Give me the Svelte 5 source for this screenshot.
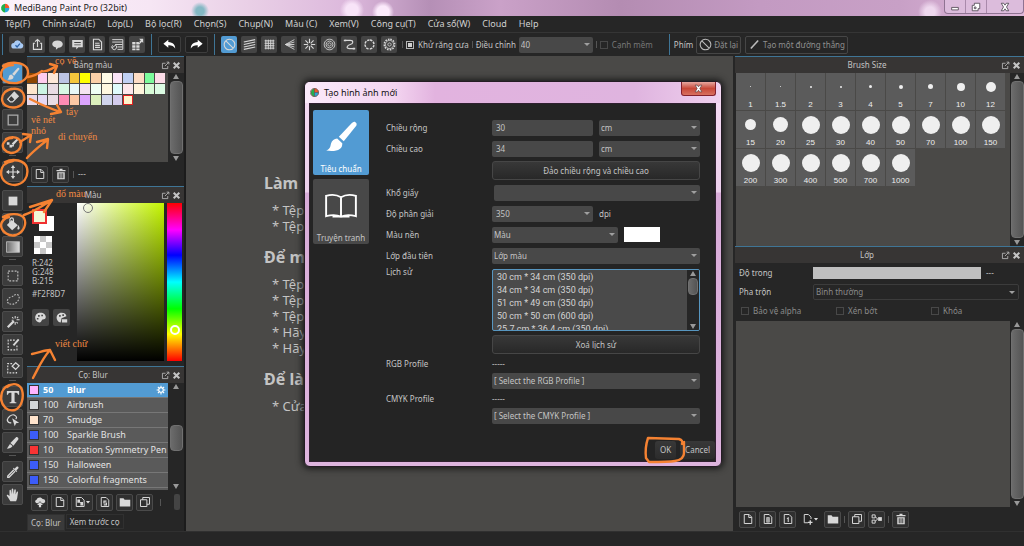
<script lang="ts">
  // Icons, all on a 16x16 grid. f = filled shape, otherwise stroked
  type Shape = { d: string; f?: boolean; w?: number; dash?: string; c?: string }
  const icons: Record<string, Shape[]> = {
    cloud: [
      { d: 'M4 13a3.5 3.5 0 0 1-.4-7A4.600 4.600 0 0 1 12.400 6 3.600 3.600 0 0 1 12.500 13z', f: true, c: '#a9cbf5' },
      { d: 'M5.500 9l2 2 3.500-4', w: 1.6, c: '#2c62a8' },
    ],
    share: [{ d: 'M5 6.500H3V14h10V6.500h-2M8 11V2M5 4.500L8 1.800l3 2.700' }],
    bubble: [{ d: 'M8 3c4 0 6.500 1.800 6.500 4.500S12 12 9 12l-3 2.500.3-2.700C3.400 11.500 1.500 9.800 1.500 7.500 1.500 4.800 4 3 8 3z', f: true }],
    note: [{ d: 'M1.500 2.500h13v9H9L6.500 14v-2.500h-5zM4 5v1h8V5zM4 8v1h8V8z', f: true }],
    doc: [{ d: 'M3 1.500h6.500L13 5v9.500H3zM5 6.500h5.500M5 9h6M5 11.500h6' }],
    table: [{ d: 'M1.500 2h13v12H8M1.500 5h13M5 8h9M8 11h6', w: 1.2 }, { d: 'M2 9a3 3 0 1 0 4 0M1.500 12l5-4', w: 1.2 }],
    tiles: [{ d: 'M1.500 5h4v3h-4zM6.500 5h4v3h-4zM1.500 9h4v3h-4zM6.500 9h4v3h-4zM1.500 13h4v2h-4zM6.500 13h4v2h-4zM10 1h5v5l-1.500-1.500L11 7 9.500 5.500 12 3z', f: true }],
    undo: [{ d: 'M6.500 2L.5 7l6 5V9c4-.2 6.500 1 8.500 4 0-4.500-2.500-7.500-8.500-8z', f: true }],
    redo: [{ d: 'M9.500 2l6 5-6 5V9C5.500 8.800 3 10 1 13c0-4.500 2.500-7.500 8.500-8z', f: true }],
    ban: [{ d: 'M8 1.500a6.500 6.500 0 1 0 .01 0zM3.500 3.500l9 9', w: 1.3 }],
    lines: [{ d: 'M1 5l14-3M1 8l14-3M1 11l14-3M1 14l14-3' }],
    grid: [{ d: 'M3.500 2v12M6.500 2v12M9.500 2v12M12.500 2v12M2 3.500h12M2 6.500h12M2 9.500h12M2 12.500h12', w: 1.2 }],
    vanish: [{ d: 'M14 2L3 8l11 6M3 8h11M14 5L3 8l11 3', w: 1.1 }],
    radial: [{ d: 'M8 1v5M8 10v5M1 8h5M10 8h5M3 3l3.500 3.500M9.500 9.500L13 13M13 3L9.500 6.500M6.500 9.500L3 13' }],
    rings: [{ d: 'M8 1.500a6.500 6.500 0 1 0 .01 0zM8 3.800a4.200 4.200 0 1 0 .01 0zM8 6a2 2 0 1 0 .01 0z', w: 1.1 }],
    curve: [{ d: 'M2 3h7c4 0 4 4 0 5s-6 5-1 5h5' }, { d: 'M1 2h3v2H1zM12 12h3v2h-3z', f: true }],
    ellipse: [{ d: 'M8 2.500a5.500 5.500 0 1 0 .01 0z', w: 1.8, dash: '3 1.300' }],
    gearRing: [{ d: 'M8 1.500a6.500 6.500 0 1 0 .01 0z', dash: '2 1.400', w: 1.8 }, { d: 'M8 3a5 5 0 1 0 .01 0zM8 6a2 2 0 1 0 .01 0z', w: 1.1 }],
    stroke: [{ d: 'M3.500 13L12.500 3', w: 2 }],
    brush: [
      { d: 'M14.800 1c.9.700.6 1.400 0 2.200L9.300 10 7 7.900l6-6.400c.6-.6 1.200-.9 1.800-.5z', f: true },
      { d: 'M6.200 8.700l2.400 2.200c.2 3-2.500 4.100-7.600 3.500 1.900-.7 1.900-1.600 2.300-3.300.4-1.500 1.500-2.300 2.900-2.400z', f: true },
    ],
    eraser: [{ d: 'M9.500 2.500L14 7l-6.500 6.500H5L2 10.500z' }, { d: 'M9.500 2.500L14 7l-4 4-4.500-4.500z', f: true }],
    rect: [{ d: 'M2.500 2.500h11v11h-11z', w: 1.5, c: '#aaa' }],
    pixelBrush: [{ d: 'M13.500 2l1.500 1.500-6.500 7-2-2z', f: true }, { d: 'M1 7h3v3H1zM4 10h3v3H4zM7 10h2v2H7z', f: true }],
    move: [{ d: 'M8 0l2.500 3.500h-1.800v3.800h3.800V5.500L16 8l-3.500 2.500V8.700H8.700v3.800h1.800L8 16l-2.500-3.500h1.800V8.700H3.500v1.800L0 8l3.500-2.500v1.800h3.800V3.500H5.500z', f: true }],
    square: [{ d: 'M3 3h10v10H3z', f: true }],
    bucket: [{ d: 'M6.500 3.500l7 6-6.500 5.500-6-6z', f: true }, { d: 'M4.500 7V3c0-2.500 4-2.500 4 0v3', w: 1.4 }, { d: 'M14 9c1.500 2.500 2 3.500 1 5-1 .6-2 .2-2-1z', f: true }],
    gradient: [],
    marquee: [{ d: 'M2.500 2.500h11v11h-11z', w: 1.3, dash: '2.200 1.500', c: '#bbb' }],
    lasso: [{ d: 'M3 13c-3-2-1-6 2-7 4-1 5-4 8-3s2.500 5 0 8-7 4-10 2z', w: 1.3, dash: '2 1.500', c: '#bbb' }],
    wand: [{ d: 'M2 14L9 7', w: 2.6 }, { d: 'M10.500 1v3M10.500 8v3M6.500 6h2M12 5.500h3.500M12.500 3.500L14 2M12 8l1.500 1.500M7 2.500l1.500 1.500', w: 1.2 }],
    selectPen: [{ d: 'M10 2.500H2.500v11h10V8', w: 1.3, dash: '2 1.500' }, { d: 'M14.500 1.500l-6 7', w: 2.2 }],
    selectErase: [{ d: 'M7 3H2v10.500h10V11', w: 1.3, dash: '2 1.500' }, { d: 'M11 2l4 3.500-4 4L7 6z', w: 1.4 }],
    text: [{ d: 'M1 1h14v4.500h-1.200C13.300 3.300 12.500 3 9.800 3v9.500c0 1 .4 1.300 2 1.500v1H4.200v-1c1.600-.2 2-.5 2-1.500V3C3.500 3 2.700 3.300 2.200 5.500H1z', f: true }],
    operate: [{ d: 'M6 11C2 12 .5 8 2.500 5.500S8 1 10.500 3 12 6 11 7', w: 1.4 }, { d: 'M7 6l8 5-3.500.7L10 15z', f: true }],
    slice: [{ d: 'M11.500 1.500c1-1 3.500 1 2.500 2.500L8.500 11 5 8z', f: true }, { d: 'M4.500 9l3 2.500c-1.500 2-3.500 3-6.500 3z', f: true }],
    dropper: [{ d: 'M9 5.500l-7 7V14h1.500l7-7', w: 1.5 }, { d: 'M8 4l4 4 .8-.8-1-1L14 4c1-2-.5-3-2-2L9.800 4.200l-1-1z', f: true }],
    hand: [{ d: 'M5 15C3.500 12 1.500 10 .8 8.200c.7-.9 1.800-.3 3.200 1.300V3c0-1.200 1.500-1.200 1.700 0l.5 4 .3-5.500c.1-1.200 1.700-1.200 1.800 0L8.700 7l.8-4.800c.2-1.200 1.700-1 1.700.2L11 7.500l1.200-3c.5-1 1.700-.6 1.500.5L13 10c-.2 2.500-.8 3.500-1.500 5z', f: true }],
    page: [{ d: 'M3 2h6.500L13 5.500V14H3zM9 2v4h4', w: 1.3 }],
    trash: [{ d: 'M3 5.500h10V15H3zM5 7v6.500h1.200V7zM7.400 7v6.500h1.200V7zM9.800 7v6.500H11V7zM2 2.800h4V1h4v1.800h4v1.500H2z', f: true }],
    palette: [{ d: 'M8 2c4 0 6.500 2.500 6.500 5.500 0 2.500-2 3-3.500 3-2 0-1.500 3.500-4 3.500C4 14 1.500 11.500 1.500 8S4 2 8 2zM5 5v2h2V5zM9 4.500v2h2v-2zM3.500 8.500v2h2v-2z', f: true }],
    paletteEdit: [{ d: 'M8 2c4 0 6 2 6 4.500L8 9l-1 5c-3 0-5-3-5-6s2.500-6 6-6zM5 5v2h2V5zM9 4v2h2V4zM8.500 10H15v4H8.500z', f: true }],
    gear: [{ d: 'M8 4.300a3.700 3.700 0 1 0 .01 0z', w: 2 }, { d: 'M8 1v2.500M8 12.500V15M1 8h2.500M12.500 8H15M3 3l2 2M11 11l2 2M13 3l-2 2M5 11l-2 2', w: 1.8 }],
    download: [{ d: 'M4 9.500C1 9 .8 5.500 3.500 5 4.500 1 10 1 11.500 4c4-.3 4.500 5 1.500 5.500h-2.500L8 7 5.500 9.500zM8 8l4 4H9.500v3h-3v-3H4z', f: true }],
    pageImage: [{ d: 'M3 2h7l3.500 3.500V14H3z', w: 1.3 }, { d: 'M4.500 4.500H8V8h4v4.500H8.500V9h-4z', f: true }],
    pageS: [{ d: 'M3 2h6.500L13 5.500V14H3z', w: 1.3 }, { d: 'M10 6.800H6.500v2.500H10v2.500H6.300' }],
    page8: [{ d: 'M3 2h6.500L13 5.500V14H3z', w: 1.3 }, { d: 'M6.500 6.500h3v5.500h-3zM6.500 9.200h3' }],
    page1: [{ d: 'M3 2h6.500L13 5.500V14H3z', w: 1.3 }, { d: 'M6.500 7.500L8.300 6.500V12' }],
    pageAdd: [{ d: 'M8 13H3V2h5.500L12 5.500V8', w: 1.3 }, { d: 'M11 9.500v6M8 12.500h6', w: 1.8 }],
    folder: [{ d: 'M1 3h5l1.500 2H15v9H1z', f: true }],
    copy: [{ d: 'M2 5h8.500v9H2zM5 5V2h9v9h-3.500', w: 1.3 }],
    merge: [{ d: 'M1.500 2.500h4v4h-4zM1.500 9.500h4v4h-4zM5.500 5L9 8l-3.500 3', w: 1.3 }, { d: 'M9.500 5.500h5v5h-5z', f: true }],
    popout: [{ d: 'M8 4H2.500v9.500H12V9M7 9l6.500-6.500M10 2h4v4', w: 1.4 }],
    cross: [{ d: 'M3 3l10 10M13 3L3 13', w: 3.6 }],
    book: [{ d: 'M8 3.900C6 2.600 3.500 2.500 1 3.200V12.800c2.500-.7 5-.7 7 .2 2-.9 4.500-.9 7-.2V3.200C12.500 2.500 10 2.600 8 3.900zM8 3.900v9', w: .9 }, { d: 'M4 12.600c2-.4 3 0 4 .8 1-.8 2-1.200 4-.8v.8H4z', f: true }],
  }

  const menus = ['Tệp(F)', 'Chỉnh sửa(E)', 'Lớp(L)', 'Bộ lọc(R)', 'Chọn(S)', 'Chụp(N)', 'Màu (C)', 'Xem(V)', 'Công cụ(T)', 'Cửa sổ(W)', 'Cloud', 'Help']
  const fileActions = ['cloud', 'share', 'bubble', 'note', 'doc', 'table', 'tiles']
  const snaps = ['ban', 'lines', 'grid', 'vanish', 'radial', 'rings', 'curve', 'ellipse', 'gearRing']
  const toolGroups = [
    ['brush', 'eraser', 'rect', 'pixelBrush'],
    ['move'],
    ['square', 'bucket', 'gradient'],
    ['marquee', 'lasso', 'wand', 'selectPen', 'selectErase'],
    ['text', 'operate', 'slice'],
    ['dropper', 'hand'],
  ]
  const swatches = [
    '#8b4500', '#ffccee', '#fde8d8', '#bcc4e4', '#f4c63c', '#ffff00', '#fbd0a8', '#fffbe6', '#fbe4f6', '#c0d0f4', '#fddcc4', '#7cfc9c', '#fcdce8',
    '#fde6cc', '#ccf4e4', '#e8dce4', '#d8f8e4', '#e8f8f8', '#f4e4f0', '#f0fff4', '#fff8e0', '#e0fcfc', '#fde8ec', '#fff4dc', '#d8fcd8', '#dcfce4',
    '#e8d8e8', '#e4d8f4', '#e8dce4', '#fc8cb4', '#fcc8a4', '#dca4fc', '#dcf0bc', '#d0d4ec', '#d4ccec', '#fff4cc',
  ]
  const brushes = [
    { size: 50, name: 'Blur', color: '#ffb4ff' },
    { size: 100, name: 'Airbrush', color: '#d2d6d8' },
    { size: 70, name: 'Smudge', color: '#ffe4cc' },
    { size: 100, name: 'Sparkle Brush', color: '#3c5cf8' },
    { size: 10, name: 'Rotation Symmetry Pen', color: '#fa3434' },
    { size: 150, name: 'Halloween', color: '#3c5cf8' },
    { size: 150, name: 'Colorful fragments', color: '#3c5cf8' },
  ]
  // [label, dot diameter]
  const brushSizes = [
    [1, 1], [1.5, 1], [2, 2], [3, 2], [4, 3], [5, 4], [7, 5], [10, 8], [12, 10],
    [15, 11], [20, 15], [25, 18], [30, 18], [40, 18], [50, 18], [70, 18], [100, 18], [150, 18],
    [200, 18], [300, 18], [400, 18], [500, 18], [700, 18], [1000, 18],
  ]
  const tips = [
    { title: 'Làm', lines: ['Tệp', 'Tệp'] },
    { title: 'Để m', lines: ['Tệp', 'Tệp', 'Tệp', 'Hãy', 'Hãy'] },
    { title: 'Để là', lines: ['Cửa'] },
  ]
  const history = ['30 cm * 34 cm (350 dpi)', '34 cm * 34 cm (350 dpi)', '51 cm * 49 cm (350 dpi)', '50 cm * 50 cm (600 dpi)', '25.7 cm * 36.4 cm (350 dpi)']

  let tool = $state('brush')
  let snap = $state('ban')
  let brush = $state(0)
  let width = $state('30')
  let height = $state('34')
  let antialias = $state(true)

  const swap = () => {
    const w = width
    width = height
    height = w
  }
</script>

{#snippet icon(name)}
  <svg class="icon" viewBox="0 0 16 16" aria-hidden="true">
    {#if name === 'gradient'}
      <defs>
        <linearGradient id="toolGradient"><stop offset="0" stop-color="#666" /><stop offset="1" stop-color="#ddd" /></linearGradient>
      </defs>
      <path d="M.5 2h15v12H.5z" fill="url(#toolGradient)" stroke="#bbb" />
    {/if}
    {#each icons[name] as s}
      <path
        d={s.d}
        fill={s.f ? (s.c ?? 'currentColor') : 'none'}
        fill-rule="evenodd"
        stroke={s.f ? 'none' : (s.c ?? 'currentColor')}
        stroke-width={s.w ?? 1.4}
        stroke-dasharray={s.dash}
      />
    {/each}
  </svg>
{/snippet}

{#snippet logo()}
  <svg class="logo" viewBox="0 0 16 16" aria-hidden="true">
    <circle cx="8" cy="8" r="7.500" fill="#fff" />
    <path d="M8 1C3 2 1 6 2 10c1 3 3 5 6 5V8z" fill="#22b14c" />
    <path d="M8 1c4 0 7 3 7 7H8z" fill="#f0592a" />
    <path d="M15 8c0 4-3 7-7 7V8z" fill="#2aa7d8" />
  </svg>
{/snippet}

{#snippet panelHead(title)}
  <header class="panel-head">
    <h2>{title}</h2>
    <button aria-label="Pop out {title}">{@render icon('popout')}</button>
    <button aria-label="Close {title}">{@render icon('cross')}</button>
  </header>
{/snippet}

{#snippet scrollbar(kind)}
  <div class="scrollbar {kind}" aria-hidden="true"><i></i><b></b><i class="down"></i></div>
{/snippet}

{#snippet dropdown(id, value, kind)}
  <span class="dropdown {kind}">
    <select {id} aria-label={value || 'Khổ giấy'}><option>{value}</option></select>
  </span>
{/snippet}

<main>
  <div class="titlebar">
    {@render logo()}
    <h1>MediBang Paint Pro (32bit)</h1>
    <div class="window-buttons">
      <button aria-label="Minimize"><svg viewBox="0 0 12 12"><path d="M2 6.500h8v3H2z" /></svg></button>
      <button aria-label="Restore"><svg viewBox="0 0 12 12"><path d="M4 1.500h6.500V8H8.500v2.500H1.500V4H4z" /><path d="M4 6h2v2H4z" /></svg></button>
      <button class="wide" aria-label="Close"><svg viewBox="0 0 12 12"><path d="M1.500 1.500h3L6 3.800l1.500-2.300h3L7.800 6l2.700 4.500h-3L6 8.200l-1.500 2.300h-3L4.200 6z" /></svg></button>
    </div>
  </div>

  <nav class="menubar">
    {#each menus as m}<button>{m}</button>{/each}
  </nav>

  <div class="toolbar">
    <i class="grip"></i>
    <div class="tool-row">
      {#each fileActions as a}<button class="tile" aria-label={a}>{@render icon(a)}</button>{/each}
    </div>
    <i class="grip"></i>
    <div class="tool-row">
      <button class="tile history" aria-label="Undo">{@render icon('undo')}</button>
      <button class="tile history" aria-label="Redo">{@render icon('redo')}</button>
    </div>
    <i class="grip"></i>
    <div class="tool-row">
      {#each snaps as s}
        <button class="tile" class:active={snap === s} aria-label={s} onclick={() => (snap = s)}>{@render icon(s)}</button>
      {/each}
    </div>
    <div class="options">
      <i class="sep"></i>
      <label class="check"><input type="checkbox" bind:checked={antialias} />Khử răng cưa</label>
      <i class="sep"></i>
      <label for="correction">Điều chỉnh</label>
      {@render dropdown('correction', '40', 'correction')}
      <i class="sep"></i>
      <label class="check dim"><input type="checkbox" disabled />Cạnh mềm</label>
      <i class="grip late"></i>
      <span>Phím</span>
      <div class="tool-row">
        <button class="outlined">{@render icon('ban')}Đặt lại</button>
        <button class="outlined">{@render icon('stroke')}Tạo một đường thẳng</button>
      </div>
    </div>
  </div>

  <div class="workspace">
    <div class="tools">
      {#each toolGroups as group, i}
        {#if i}<i></i>{/if}
        {#each group as t}
          <button class="tile" class:active={tool === t} aria-label={t} onclick={() => (tool = t)}>{@render icon(t)}</button>
        {/each}
      {/each}
    </div>

    <div class="side left">
      <section class="panel palette-panel">
        {@render panelHead('Bảng màu')}
        <div class="scroll-area">
          <div class="swatches">
            {#each swatches as color, i}
              <button class:current={i === swatches.length - 1} style="background: {color}" aria-label={color}></button>
            {/each}
          </div>
          {@render scrollbar('full')}
        </div>
        <div class="panel-tools">
          <button class="tile" aria-label="New color">{@render icon('page')}</button>
          <button class="tile" aria-label="Delete color">{@render icon('trash')}</button>
          <i class="sep"></i><span>---</span>
        </div>
      </section>

      <section class="panel color-panel">
        {@render panelHead('Màu')}
        <div class="color-body">
          <div class="color-info">
            <div class="fore-back"><i></i><b></b></div>
            <div class="transparent"></div>
            <p>R:242<br />G:248<br />B:215</p>
            <p>#F2F8D7</p>
            <div class="color-tools">
              <button class="tile" aria-label="Palette">{@render icon('palette')}</button>
              <button class="tile" aria-label="Edit palette">{@render icon('paletteEdit')}</button>
            </div>
          </div>
          <div class="shade"><i></i></div>
          <div class="hue"><i></i></div>
        </div>
      </section>

      <section class="panel brush-panel">
        {@render panelHead('Cọ: Blur')}
        <div class="scroll-area">
          <ul class="brushes">
            {#each brushes as b, i}
              <li>
                <button class:selected={brush === i} onclick={() => (brush = i)}>
                  <i style="background: {b.color}"></i><span class="size">{b.size}</span><span class="name">{b.name}</span>
                  {#if brush === i}{@render icon('gear')}{/if}
                </button>
              </li>
            {/each}
          </ul>
          {@render scrollbar('middle')}
        </div>
        <div class="panel-tools">
          <button class="tile" aria-label="Download brush">{@render icon('download')}</button>
          <button class="tile" aria-label="New brush">{@render icon('page')}</button>
          <button class="tile menu" aria-label="New brush from image">{@render icon('pageImage')}</button>
          <button class="tile" aria-label="Script brush">{@render icon('pageS')}</button>
          <button class="tile" aria-label="Brush folder">{@render icon('folder')}</button>
          <button class="tile" aria-label="Duplicate brush">{@render icon('copy')}</button>
          <i class="sep"></i>
          <b class="stub"></b>
        </div>
      </section>
      <div class="tabs">
        <button class="on">Cọ: Blur</button>
        <button>Xem trước cọ</button>
      </div>
    </div>

    <div class="canvas">
      {#each tips as tip}
        <h3>{tip.title}</h3>
        <ul>
          {#each tip.lines as line}<li>* {line}</li>{/each}
        </ul>
      {/each}
    </div>

    <div class="side right">
      <section class="panel size-panel">
        {@render panelHead('Brush Size')}
        <div class="scroll-area">
          <div class="sizes">
            {#each brushSizes as [size, dot]}
              <button><span class="dot"><i style="width: {dot}px; height: {dot}px"></i></span>{size}</button>
            {/each}
          </div>
          {@render scrollbar('full')}
        </div>
      </section>

      <section class="panel layer-panel">
        {@render panelHead('Lớp')}
        <div class="layer-form">
          <label for="opacity">Độ trong</label>
          <input id="opacity" type="range" value="100" />
          <span>---</span>
          <label for="blend">Pha trộn</label>
          {@render dropdown('blend', 'Bình thường', 'blend')}
        </div>
        <div class="layer-checks">
          <label class="check"><input type="checkbox" disabled />Bảo vệ alpha</label>
          <label class="check"><input type="checkbox" disabled />Xén bớt</label>
          <label class="check"><input type="checkbox" disabled />Khóa</label>
        </div>
        <div class="scroll-area">
          <div class="layers"></div>
          {@render scrollbar('full')}
        </div>
        <div class="panel-tools">
          <button class="tile" aria-label="New layer">{@render icon('page')}</button>
          <button class="tile" aria-label="New 8bit layer">{@render icon('page8')}</button>
          <button class="tile" aria-label="New 1bit layer">{@render icon('page1')}</button>
          <button class="tile menu bare" aria-label="Add layer">{@render icon('pageAdd')}</button>
          <button class="tile" aria-label="New folder">{@render icon('folder')}</button>
          <i class="sep"></i>
          <button class="tile" aria-label="Duplicate layer">{@render icon('copy')}</button>
          <button class="tile" aria-label="Merge layers">{@render icon('merge')}</button>
          <i class="sep"></i>
          <button class="tile" aria-label="Delete layer">{@render icon('trash')}</button>
        </div>
      </section>
    </div>
  </div>
  <footer class="statusbar"></footer>

  <!-- New image window -->
  <div class="dialog" role="dialog" aria-label="Tạo hình ảnh mới">
    <div class="dialog-title">
      {@render logo()}
      <h2>Tạo hình ảnh mới</h2>
      <button aria-label="Close dialog"><svg viewBox="0 0 12 12"><path d="M1.500 1.500h3L6 3.800l1.500-2.300h3L7.800 6l2.700 4.500h-3L6 8.200l-1.500 2.300h-3L4.200 6z" /></svg></button>
    </div>
    <div class="dialog-body">
      <div class="kinds">
        <button class="on">{@render icon('brush')}<span>Tiêu chuẩn</span></button>
        <button>{@render icon('book')}<span>Truyện tranh</span></button>
      </div>
      <form onsubmit={(e) => e.preventDefault()}>
        <label for="width">Chiều rộng</label>
        <div class="pair"><input id="width" bind:value={width} />{@render dropdown('width-unit', 'cm', '')}</div>
        <label for="height">Chiều cao</label>
        <div class="pair"><input id="height" bind:value={height} />{@render dropdown('height-unit', 'cm', '')}</div>
        <button type="button" class="wide-button" onclick={swap}>Đảo chiều rộng và chiều cao</button>
        <label for="paper">Khổ giấy</label>
        <div class="field paper">{@render dropdown('paper', '', '')}</div>
        <label for="resolution">Độ phân giải</label>
        <div class="pair">{@render dropdown('resolution', '350', 'inset')}<span>dpi</span></div>
        <label for="background">Màu nền</label>
        <div class="field">{@render dropdown('background', 'Màu', 'background')}<i class="fill-color"></i></div>
        <label for="first-layer">Lớp đầu tiên</label>
        <div class="field">{@render dropdown('first-layer', 'Lớp màu', '')}</div>
        <span class="history-label">Lịch sử</span>
        <div class="history-box">
          <ul>
            {#each history as h}<li>{h}</li>{/each}
          </ul>
          {@render scrollbar('short')}
        </div>
        <button type="button" class="wide-button">Xoá lịch sử</button>
        <label for="rgb">RGB Profile</label>
        <span>-----</span>
        <div class="field profile">{@render dropdown('rgb', '[ Select the RGB Profile ]', '')}</div>
        <label for="cmyk">CMYK Profile</label>
        <span>-----</span>
        <div class="field profile">{@render dropdown('cmyk', '[ Select the CMYK Profile ]', '')}</div>
      </form>
      <div class="dialog-actions">
        <button>OK</button>
        <button>Cancel</button>
      </div>
    </div>
  </div>

  <!-- Handwritten notes on top of the app -->
  <svg class="notes" width="1024" height="546" viewBox="0 0 1024 546">
    <path d="M3 66c7-5 20-4 24 2 3 7-1 13-10 15-9 1-17-3-16-9 0-5 5-9 12-9" />
    <path d="M28 77c6-1 10-3 14-6 4 2 8-2 15-5M50 64l7 2-3 7" />
    <path d="M5 92c6-5 15-4 18 1 3 6 1 12-6 14-8 2-15-2-15-8 0-5 4-9 9-10" />
    <path d="M30 99c12 6 20 10 31 13M57 105l4 7-10 2" />
    <path d="M6 139c7-4 14-1 15 4 0 6-4 10-10 10-6-1-9-5-8-9 2-4 5-6 9-6M20 142l11-7M23 134l8 1-1 7" />
    <path d="M5 162c8-4 20-2 22 6 2 10-4 16-12 17-9 0-14-6-14-12s4-11 12-12M27 158c6-7 13-12 20-18M37 142l11-3-1 9" />
    <path d="M3 217c6-4 17-4 21 1 3 6 0 14-8 17-7 2-14-3-15-9 0-4 3-8 8-9M24 215c10-3 18-9 28-15M30 207l22-7-8 12" />
    <path d="M33 378c6-11 9-19 17-28M32 354c7-1 12-4 18-4l5 10" />
    <path d="M7 387c6-5 13-3 15 3 2 7 0 17-7 20-8 2-13-4-14-11 0-7 3-12 8-14" />
    <path d="M682 444c1-3 0-4-3-5l-31-1c-2 6-3 12-2 20l3 4c10 0 20 0 26-1 6-1 9-3 9-8v-11z" />
    <text x="55" y="64">cọ vẽ</text>
    <text x="66" y="115">tẩy</text>
    <text x="31" y="123">vẽ nét</text>
    <text x="31" y="134">nhỏ</text>
    <text x="58" y="140">di chuyển</text>
    <text x="56" y="197">đổ màu</text>
    <text x="55" y="347">viết chữ</text>
  </svg>
</main>

<style>
  /* Base */
  :global(body) {
    background: #262626;
  }
  main {
    position: relative;
    display: flex;
    flex-direction: column;
    min-height: 100vh;
    overflow: hidden;
    background: #262626;
    color: #c4c4c4;
    font: 8px/12px "Noto Sans", "DejaVu Sans", sans-serif;
  }
  main * {
    box-sizing: border-box;
  }
  h1, h2, h3, p, ul {
    margin: 0;
    padding: 0;
    font-size: inherit;
    font-weight: normal;
    list-style: none;
  }
  button, input, select {
    margin: 0;
    padding: 0;
    border: 0;
    border-radius: 0;
    background: none;
    color: inherit;
    font: inherit;
  }
  i {
    flex: none;
  }
  .icon {
    display: block;
    flex: none;
    width: 13px;
    height: 13px;
  }
  .logo {
    width: 10px;
    height: 10px;
  }

  /* Title */
  .titlebar {
    display: flex;
    align-items: flex-start;
    height: 16px;
    background:
      radial-gradient(circle at 352px 10px, #f8e4f8 0 6px, transparent 12px),
      radial-gradient(circle at 383px 12px, #fbeafb 0 6px, transparent 11px),
      radial-gradient(circle at 200px 11px, #84b8c4 0 4px, transparent 9px),
      radial-gradient(circle at 930px 12px, #eed8ee 0 5px, transparent 12px),
      linear-gradient(90deg, #fbf3fa 0, #f6e6f4 150px, #e9cfe6 250px, #dcb8dc 350px, #b58fb6 430px, #caa1c8 500px, #b48cb2 620px, #c39ac2 760px, #c8a0c6 900px, #deb8da 100%);
    color: #222;
    font-size: 9px;
  }
  .titlebar .logo {
    margin: 3px 4px 0 0;
  }
  .titlebar h1 {
    flex: 1;
    line-height: 16px;
  }
  .window-buttons {
    display: flex;
    border: 1px solid #8f7392;
    border-top: 0;
    border-radius: 0 0 4px 4px;
    background: #dcbcdc;
  }
  .window-buttons button {
    width: 21px;
    height: 13px;
    border-right: 1px solid #a98aab;
  }
  .window-buttons .wide {
    width: 36px;
    border: 0;
  }
  .window-buttons svg {
    display: block;
    width: 10px;
    height: 10px;
    margin: 0 auto;
    fill: #fff;
    stroke: #4d4450;
  }

  /* Menu */
  .menubar {
    display: flex;
    gap: 12px;
    height: 17px;
    padding: 0 5px;
    border-bottom: 1px solid #353535;
    color: #d0d0d0;
    font-size: 9px;
  }

  /* Toolbar */
  .toolbar {
    display: flex;
    align-items: center;
    gap: 5px;
    height: 23px;
    padding-left: 1px;
    white-space: nowrap;
  }
  .tool-row {
    display: flex;
    gap: 4px;
  }
  .options {
    display: flex;
    align-items: center;
    gap: 3px;
  }
  .grip {
    width: 1px;
    height: 21px;
    margin: 0 1px;
    background: #3f7596;
  }
  .sep {
    width: 1px;
    height: 7px;
    background: #555;
  }
  .late {
    margin-left: 13px;
  }
  .tile {
    display: flex;
    align-items: center;
    justify-content: center;
    width: 16px;
    height: 17px;
    border-radius: 2px;
    background: #444;
    color: #d8d8d8;
  }
  .tile.active {
    background: #529bd3;
  }
  .tile.history {
    width: 23px;
    border: 1px solid #3d3d3d;
    background: #202020;
    color: #fff;
  }
  .check {
    display: flex;
    align-items: center;
    gap: 4px;
  }
  .check input {
    display: grid;
    place-items: center;
    width: 8px;
    height: 8px;
    border: 1px solid #b5b5b5;
    appearance: none;
  }
  .check input:disabled {
    border-color: #484848;
  }
  .check input:checked::before {
    content: "";
    width: 4px;
    height: 4px;
    background: #d0d0d0;
  }
  .dim {
    color: #777;
  }
  .dropdown {
    position: relative;
    display: block;
    flex: 1;
    height: 16px;
    border-radius: 2px;
    background: #484848;
  }
  .dropdown select {
    display: block;
    width: 100%;
    height: 100%;
    padding: 0 14px 0 2px;
    appearance: none;
    outline: 0;
  }
  .dropdown::after {
    content: "";
    position: absolute;
    top: 6px;
    right: 3px;
    border: 3px solid transparent;
    border-top-color: #a0a0a0;
    pointer-events: none;
  }
  .correction {
    flex: 0 0 74px;
  }
  .outlined {
    display: flex;
    align-items: center;
    gap: 2px;
    height: 18px;
    padding: 0 2px;
    border: 1px solid #464646;
    border-radius: 2px;
    color: #8f8f8f;
  }
  .outlined .icon {
    color: #bbb;
  }

  /* Workspace */
  .workspace {
    display: flex;
    flex: 1;
  }
  .tools {
    display: flex;
    flex-direction: column;
    align-items: center;
    gap: 2px;
    width: 25px;
    padding-top: 7px;
  }
  .tools .tile {
    width: 21px;
    height: 21px;
    border: 1px solid #4c4c4c;
    background: #3c3c3c;
  }
  .tools .tile.active {
    background: #529bd3;
  }
  .tools .tile .icon {
    width: 14px;
    height: 14px;
  }
  .tools i {
    width: 7px;
    height: 4px;
    border-top: 1px solid #555;
  }
  .side {
    display: flex;
    flex: none;
    flex-direction: column;
    border-right: 2px solid #1c1c1c;
  }
  .left {
    width: 161px;
    padding-left: 2px;
  }
  .right {
    width: 291px;
    padding-left: 2px;
    border: 0;
  }
  .panel {
    display: flex;
    flex-direction: column;
    border-top: 1px solid #3f7596;
  }
  .panel-head {
    display: flex;
    flex: none;
    align-items: center;
    gap: 2px;
    height: 16px;
    padding-right: 3px;
    background: #373534;
  }
  .panel-head h2 {
    flex: 1;
    text-align: center;
  }
  .panel-head .icon {
    width: 9px;
    height: 9px;
  }
  .scroll-area {
    display: flex;
    flex: 1;
    min-height: 0;
  }
  .right .scroll-area {
    padding-left: 1px;
  }
  .scroll-area > :first-child {
    flex: 1;
    background: #4a4947;
  }
  .scrollbar {
    display: flex;
    flex: none;
    flex-direction: column;
    align-items: center;
    justify-content: space-between;
    width: 16px;
    padding: 1px 0;
    background: #262626;
  }
  .scrollbar i {
    height: 5px;
    border: 3px solid transparent;
    border-top: 0;
    border-bottom: 5px solid #999;
  }
  .scrollbar .down {
    transform: rotate(180deg);
  }
  .scrollbar b {
    flex: 1;
    width: 13px;
    margin: 2px 0;
    border: 1px solid #707070;
    border-radius: 4px;
    background: linear-gradient(90deg, #6b6b6b, #545454);
  }
  .middle b {
    flex: none;
    height: 26px;
    margin-top: 4px;
  }
  .panel-tools {
    display: flex;
    flex: none;
    align-items: center;
    gap: 3px;
    height: 24px;
    padding-left: 4px;
  }
  .panel-tools .tile {
    width: 17px;
    height: 17px;
    border: 1px solid #4a4a4a;
    background: #303030;
  }
  .panel-tools .icon {
    width: 12px;
    height: 12px;
  }
  .panel-tools .menu {
    width: 22px;
  }
  .panel-tools .bare {
    border: 0;
    background: none;
  }
  .menu::after {
    content: "";
    width: 5px;
    height: 3px;
    background: #ddd;
    clip-path: polygon(0 0, 100% 0, 50% 100%);
  }

  /* Palette */
  .palette-panel {
    height: 130px;
  }
  .swatches {
    display: grid;
    grid-template-columns: repeat(13, 1fr);
    grid-auto-rows: 10px;
    align-content: start;
    gap: 1px;
    padding-right: 3px;
  }
  .swatches .current {
    border: 1px solid #e02020;
  }
  .palette-panel .panel-tools {
    gap: 4px;
  }

  /* Color */
  .color-panel {
    height: 180px;
  }
  .color-body {
    display: flex;
    flex: 1;
    gap: 3px;
    padding: 0 2px 5px 5px;
  }
  .color-info {
    width: 42px;
    padding-top: 6px;
    line-height: 9px;
  }
  .fore-back {
    position: relative;
    z-index: 0;
    width: 22px;
    height: 22px;
  }
  .fore-back i, .fore-back b {
    position: absolute;
    width: 15px;
    height: 15px;
    background: #f2f8d7;
    border: 2px solid #f03030;
  }
  .fore-back b {
    right: 0;
    bottom: 0;
    z-index: -1;
    border: 0;
    background: #fff;
  }
  .transparent {
    width: 18px;
    height: 18px;
    margin: 5px 0 4px 2px;
    background: repeating-conic-gradient(#c8c8c8 0 25%, #fff 0 50%) 0 0 / 12px 12px;
  }
  .color-info p {
    margin-bottom: 4px;
  }
  .color-tools {
    display: flex;
    gap: 4px;
    margin-top: 11px;
  }
  .color-tools .tile {
    width: 17px;
  }
  .shade, .hue {
    position: relative;
    flex: 1;
    background: linear-gradient(#0000, #000), linear-gradient(90deg, #fff, #c4f500);
  }
  .hue {
    flex: 0 0 15px;
    background: linear-gradient(#f00, #f0f 17%, #00f 33%, #0ff 50%, #0f0 67%, #ff0 83%, #f00);
  }
  .shade i, .hue i {
    position: absolute;
    top: 0;
    left: 6px;
    width: 10px;
    height: 10px;
    border: 1px solid #777;
    border-radius: 50%;
  }
  .hue i {
    top: 77%;
    left: 3px;
    border: 2px solid #fff;
  }

  /* Brush list */
  .brush-panel {
    height: 148px;
  }
  .scroll-area > .brushes {
    overflow: hidden;
    background: #5a5a5a;
  }
  .brushes button {
    display: flex;
    align-items: center;
    width: 100%;
    height: 15px;
    padding: 0 2px;
    border-bottom: 1px solid #777;
    color: #e2e2e2;
    font-size: 9px;
    text-align: left;
    white-space: nowrap;
  }
  .brushes .selected {
    background: #529bd3;
    color: #fff;
    font-weight: bold;
  }
  .brushes i {
    width: 10px;
    height: 10px;
    border: 1px solid #333;
  }
  .size {
    flex: none;
    width: 24px;
    margin-left: 4px;
  }
  .name {
    flex: 1;
  }
  .brushes .icon {
    width: 10px;
    height: 10px;
  }
  .brush-panel .sep {
    margin-left: auto;
  }
  .stub {
    width: 6px;
    height: 16px;
    margin: 0 4px 0 10px;
    border-radius: 2px;
    background: #444;
  }
  .tabs {
    display: flex;
    gap: 1px;
  }
  .tabs button {
    height: 15px;
    padding: 0 3px;
    border: 1px solid #303030;
  }
  .tabs .on {
    height: 17px;
    background: #3a3a3a;
  }

  /* Canvas */
  .canvas {
    flex: 1;
    min-width: 0;
    padding: 117px 0 0 78px;
    background: #4a4947;
    font-size: 13px;
    line-height: 16px;
  }
  .canvas h3 {
    font-size: 16px;
    font-weight: bold;
    line-height: 20px;
  }
  .canvas ul {
    margin: 9px 0 13px 8px;
  }

  /* Brush size */
  .size-panel {
    height: 190px;
  }
  .sizes {
    display: grid;
    grid-template-columns: repeat(9, 29px);
    grid-auto-rows: 37px;
    align-content: start;
    gap: 1px;
  }
  .sizes button {
    display: flex;
    flex-direction: column;
    align-items: center;
    background: #5b5b5b;
    color: #eee;
    font: 8px/9px "Liberation Sans", sans-serif;
  }
  .dot {
    display: grid;
    place-items: center;
    height: 27px;
  }
  .dot i {
    border-radius: 50%;
    background: #efefef;
  }
  .right .scrollbar {
    width: 14px;
  }

  /* Layers */
  .layer-panel {
    flex: 1;
  }
  .layer-form {
    display: grid;
    grid-template-columns: 74px 1fr 43px;
    grid-template-rows: 12px 16px;
    align-items: center;
    gap: 5px 0;
    padding: 4px 0 0 4px;
  }
  .layer-form input {
    width: 100%;
    height: 12px;
    background: #bfbfbf;
    appearance: none;
  }
  .layer-form input::-webkit-slider-thumb {
    width: 1px;
    height: 12px;
    appearance: none;
  }
  .layer-form span {
    padding-left: 5px;
  }
  .layer-form .dropdown {
    grid-column: 2 / 4;
    margin-right: 5px;
    padding: 0;
    border: 1px solid #3c3c3c;
    background: none;
    color: #8a8a8a;
  }
  .layer-checks {
    display: grid;
    grid-template-columns: repeat(3, 95px);
    height: 21px;
    padding-left: 6px;
    color: #8a8a8a;
  }

  .statusbar {
    height: 15px;
    border-top: 1px solid #303030;
  }

  /* Dialog */
  .dialog {
    position: absolute;
    top: 81px;
    left: 304px;
    width: 418px;
    padding: 0 5px 4px 4px;
    border: 1px solid #241c24;
    border-radius: 6px;
    background: linear-gradient(#f6dcf4 0, #ecd0ec 110px, #d8acd8 111px, #deb4de);
    box-shadow: 0 0 6px 2px #1c1c1c;
  }
  .dialog-title {
    display: flex;
    align-items: center;
    height: 21px;
    margin: 0 -4px;
    padding-left: 5px;
    border-radius: 5px 5px 0 0;
    background: linear-gradient(90deg, #fbeafa, #f3d4f0 90px, #e2b3df 130px, #dfb4df 330px, #efd0ee);
    color: #111;
    font-size: 9px;
  }
  .dialog-title h2 {
    flex: 1;
    padding-left: 5px;
  }
  .dialog-title button {
    align-self: flex-start;
    width: 35px;
    height: 14px;
    margin-right: 4px;
    border: 1px solid #84202c;
    border-top: 0;
    border-radius: 0 0 3px 3px;
    background: linear-gradient(#e8a8a0, #c84838 50%, #d87060);
  }
  .dialog-title svg {
    display: block;
    width: 9px;
    height: 9px;
    margin: 0 auto;
    fill: #fff;
    stroke: #644;
  }
  .dialog-body {
    display: grid;
    grid-template-columns: 56px 314px;
    column-gap: 17px;
    padding: 6px 0 0 3px;
    border: 1px solid #302030;
    background: #242424;
  }
  .kinds {
    display: flex;
    flex-direction: column;
    gap: 4px;
  }
  .kinds button {
    display: flex;
    flex-direction: column;
    align-items: center;
    justify-content: space-between;
    height: 65px;
    padding-top: 10px;
    border-radius: 2px;
    background: #484848;
  }
  .kinds .on {
    background: #529bd3;
    color: #fff;
  }
  .kinds .icon {
    width: 34px;
    height: 34px;
    color: #fff;
  }
  form {
    display: grid;
    grid-template-columns: 106px 208px;
    grid-template-rows: 21px 21px 23px 21px 21px 21px 21px 67px 23px 15px 20px 15px 20px;
    align-items: center;
    padding-top: 7px;
  }
  .pair, .field {
    display: flex;
    align-items: center;
    gap: 6px;
  }
  .pair > :global(*) {
    flex: 0 0 101px;
    min-width: 0;
  }
  .pair input {
    width: 101px;
    height: 16px;
    padding-left: 4px;
    border-radius: 2px;
    background: #484848;
  }
  .inset select {
    padding-left: 4px;
  }
  .paper {
    padding-left: 2px;
  }
  .field .background {
    flex: 0 0 126px;
  }
  .fill-color {
    width: 36px;
    height: 15px;
    background: #fff;
  }
  .wide-button {
    grid-column: 2;
    height: 19px;
    border: 1px solid #464646;
    border-radius: 3px;
    background: linear-gradient(#383838, #282828);
  }
  .history-label {
    align-self: start;
  }
  .history-box {
    display: flex;
    height: 62px;
    overflow: hidden;
    border: 1px solid #5796c0;
    border-radius: 2px;
    background: #4a4a4a;
    color: #d4d4d4;
  }
  .history-box ul {
    flex: 1;
    padding: 1px 4px;
    font: 9px/13px Roboto, "Noto Sans", sans-serif;
  }
  .history-box .scrollbar {
    width: 12px;
  }
  .short b {
    flex: none;
    width: 10px;
    height: 17px;
    margin-bottom: auto;
  }
  .profile {
    grid-column: 2;
  }
  .dialog-actions {
    display: flex;
    grid-column: 1 / 3;
    justify-content: flex-end;
    gap: 4px;
    margin-right: -15px;
    padding: 15px 0 2px;
  }
  .dialog-actions button {
    height: 18px;
    padding: 0 5px;
    border-radius: 3px;
    background: linear-gradient(#383838, #2c2c2c);
  }

  /* Notes */
  .notes {
    position: absolute;
    top: 0;
    left: 0;
    fill: none;
    stroke: #f58232;
    stroke-width: 2.4;
    stroke-linecap: round;
    stroke-linejoin: round;
    pointer-events: none;
  }
  .notes text {
    fill: #f08a44;
    stroke: none;
    font: 10px "Liberation Serif", serif;
  }
</style>
